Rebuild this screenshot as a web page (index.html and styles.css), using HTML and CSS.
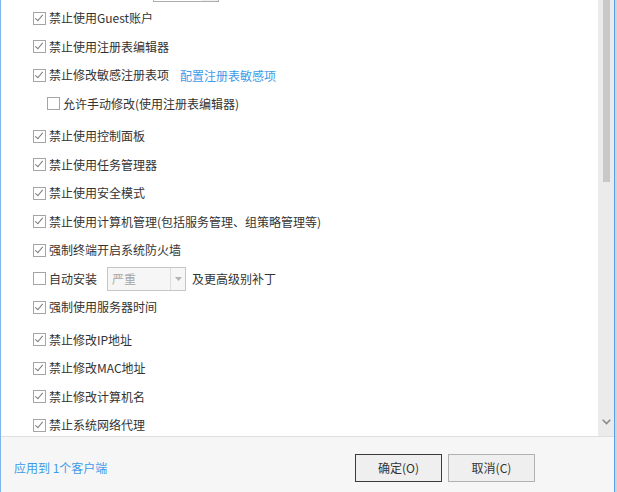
FILE: index.html
```html
<!DOCTYPE html>
<html lang="zh-CN">
<head>
<meta charset="utf-8">
<link rel="stylesheet" href="styles.css">
</head>
<body>
<div class="window">
  <div class="main">
    <div class="scroll-area">
      <div class="list">
        <div class="row row-top"><span class="select select-top"><span class="select-arrow"></span></span></div>

        <div class="row"><span class="cb on"></span><span class="label">禁止使用Guest账户</span></div>
        <div class="row"><span class="cb on"></span><span class="label">禁止使用注册表编辑器</span></div>
        <div class="row"><span class="cb on"></span><span class="label">禁止修改敏感注册表项</span><a class="link cfg">配置注册表敏感项</a></div>
        <div class="row sub"><span class="cb"></span><span class="label">允许手动修改(使用注册表编辑器)</span></div>

        <div class="row gap"><span class="cb on"></span><span class="label">禁止使用控制面板</span></div>
        <div class="row"><span class="cb on"></span><span class="label">禁止使用任务管理器</span></div>
        <div class="row"><span class="cb on"></span><span class="label">禁止使用安全模式</span></div>
        <div class="row"><span class="cb on"></span><span class="label">禁止使用计算机管理(包括服务管理、组策略管理等)</span></div>
        <div class="row"><span class="cb on"></span><span class="label">强制终端开启系统防火墙</span></div>
        <div class="row"><span class="cb"></span><span class="label">自动安装</span><span class="select sev"><span class="sel-text">严重</span><span class="select-arrow"><svg width="7" height="4" viewBox="0 0 7 4"><path d="M0 0h7L3.5 4z" fill="#b4b4b4"/></svg></span></span><span class="label after">及更高级别补丁</span></div>
        <div class="row"><span class="cb on"></span><span class="label">强制使用服务器时间</span></div>

        <div class="row gap"><span class="cb on"></span><span class="label">禁止修改IP地址</span></div>
        <div class="row"><span class="cb on"></span><span class="label">禁止修改MAC地址</span></div>
        <div class="row"><span class="cb on"></span><span class="label">禁止修改计算机名</span></div>
        <div class="row"><span class="cb on"></span><span class="label">禁止系统网络代理</span></div>
      </div>
    </div>
    <div class="scrollbar">
      <div class="thumb"></div>
      <div class="track-rest"></div>
      <div class="arrow-down"><svg width="9" height="6" viewBox="0 0 9 6"><path d="M0.7 0.7L4.5 4.5L8.3 0.7" fill="none" stroke="#8a8a8a" stroke-width="1.6"/></svg></div>
    </div>
  </div>
  <div class="footer">
    <a class="link apply">应用到 1个客户端</a>
    <button class="btn default">确定(O)</button>
    <button class="btn">取消(C)</button>
  </div>
</div>
</body>
</html>
```

FILE: styles.css
```css
html, body {
  margin: 0;
  padding: 0;
  background: #d4d4d4;
}
body {
  width: 617px;
  height: 492px;
  overflow: hidden;
  font-family: "Noto Sans CJK SC", "Noto Sans", sans-serif;
  font-size: 12px;
  color: #333;
}
.window {
  width: 613px;
  height: 492px;
  border-left: 1px solid #7fb5ea;
  border-right: 1px solid #5c9ee6;
  background: #fff;
  display: flex;
  flex-direction: column;
}
.main {
  height: 436px;
  display: flex;
  border-bottom: 1px solid #dedede;
  flex: none;
}
.scroll-area {
  flex: 1;
  overflow: hidden;
}
.list {
  margin-top: -24.75px;
  padding-left: 32px;
}
.row {
  height: 28.5px;
  display: flex;
  align-items: center;
  white-space: nowrap;
}
.row.gap { margin-top: 4px; }
.row.sub { padding-left: 14px; }
.row-top { padding-left: 120px; }
.cb {
  width: 11px;
  height: 11px;
  border: 1px solid #a5a5a5;
  background: #fff;
  margin-right: 3px;
  flex: none;
  position: relative;
}
.cb.on::after {
  content: "";
  position: absolute;
  left: 3px;
  top: 0px;
  width: 3px;
  height: 7px;
  border-right: 1px solid #7a7a7a;
  border-bottom: 1px solid #7a7a7a;
  transform: rotate(40deg);
}
.label { line-height: 16px; }
.link {
  color: #3d9be9;
  text-decoration: none;
  cursor: pointer;
}
.cfg { margin-left: 11px; }
.select {
  display: flex;
  align-items: center;
  border: 1px solid #c6c6c6;
  background: #f6f6f6;
  height: 22px;
  box-sizing: content-box;
}
.select-top {
  width: 64px;
  border-color: #adadad;
  background: #fff;
}
.select-top .select-arrow {
  margin-left: auto;
  width: 17px;
  height: 22px;
  background: #f0f0f0;
}
.sev {
  width: 77px;
  margin-left: 10px;
}
.sel-text {
  color: #a6a6a6;
  padding-left: 4px;
  flex: 1;
}
.sev .select-arrow {
  width: 14px;
  height: 22px;
  border-left: 1px solid #dcdcdc;
  display: flex;
  align-items: center;
  justify-content: center;
}
.after { margin-left: 6px; }
.scrollbar {
  width: 16px;
  background: #ebebeb;
  display: flex;
  flex-direction: column;
  align-items: center;
}
.thumb {
  width: 7px;
  height: 182px;
  background: #c8c8c8;
}
.track-rest { flex: 1; }
.arrow-down {
  height: 17px;
  display: flex;
  align-items: flex-start;
  justify-content: center;
}
.footer {
  flex: 1;
  background: #f6f6f6;
  display: flex;
  align-items: center;
  padding-left: 13px;
  padding-top: 6px;
  padding-right: 79px;
}
.apply { margin-right: auto; }
.btn {
  width: 87px;
  height: 28px;
  border: 1px solid #b0b0b0;
  background: #efefef;
  font-family: "Noto Sans CJK SC", "Noto Sans", sans-serif;
  font-size: 12px;
  color: #333;
  padding: 0;
  margin-left: 6px;
}
.btn.default {
  border-color: #3c3c3c;
}
```
